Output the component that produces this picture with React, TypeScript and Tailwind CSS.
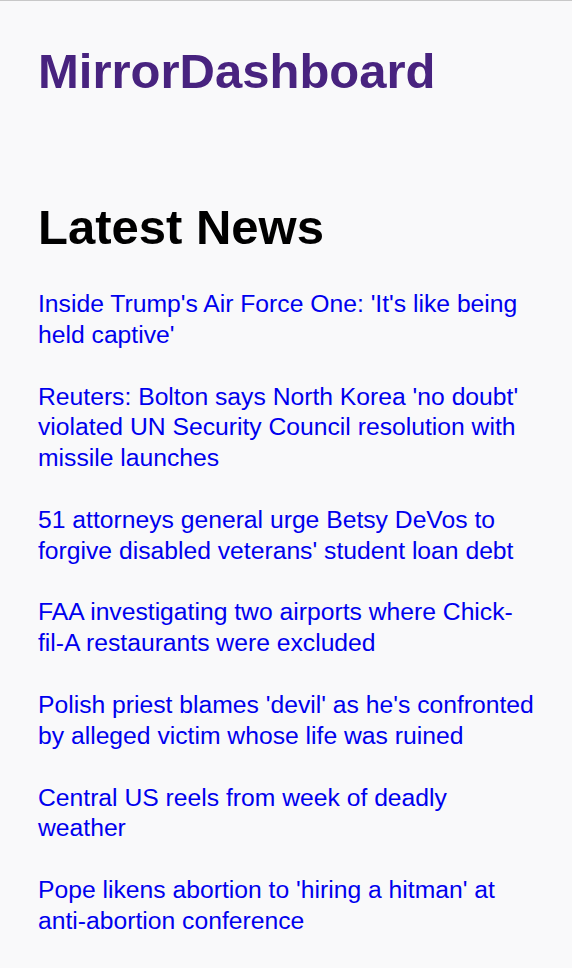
const headlines = [
  "Inside Trump's Air Force One: 'It's like being held captive'",
  "Reuters: Bolton says North Korea 'no doubt' violated UN Security Council resolution with missile launches",
  "51 attorneys general urge Betsy DeVos to forgive disabled veterans' student loan debt",
  "FAA investigating two airports where Chick-fil-A restaurants were excluded",
  "Polish priest blames 'devil' as he's confronted by alleged victim whose life was ruined",
  "Central US reels from week of deadly weather",
  "Pope likens abortion to 'hiring a hitman' at anti-abortion conference",
];

export default function App() {
  return (
    <div className="min-h-[968px] bg-[#f9f9fa] border-t border-[#c8c8c8] px-[38px] font-['Liberation_Sans',Arial,sans-serif]">
      {/* Header */}
      <h1 className="pt-[42px] text-[49px] leading-[56px] font-bold text-[#48237f]">
        MirrorDashboard
      </h1>

      {/* News */}
      <h2 className="mt-[100px] text-[49px] leading-[56px] font-bold text-black">
        Latest News
      </h2>
      <ul className="mt-[34px] flex flex-col gap-[30.85px]">
        {headlines.map((title) => (
          <li key={title}>
            <a href="#" className="text-[24.7px] leading-[30.85px] text-[#0000ee]">
              {title}
            </a>
          </li>
        ))}
      </ul>
    </div>
  );
}
